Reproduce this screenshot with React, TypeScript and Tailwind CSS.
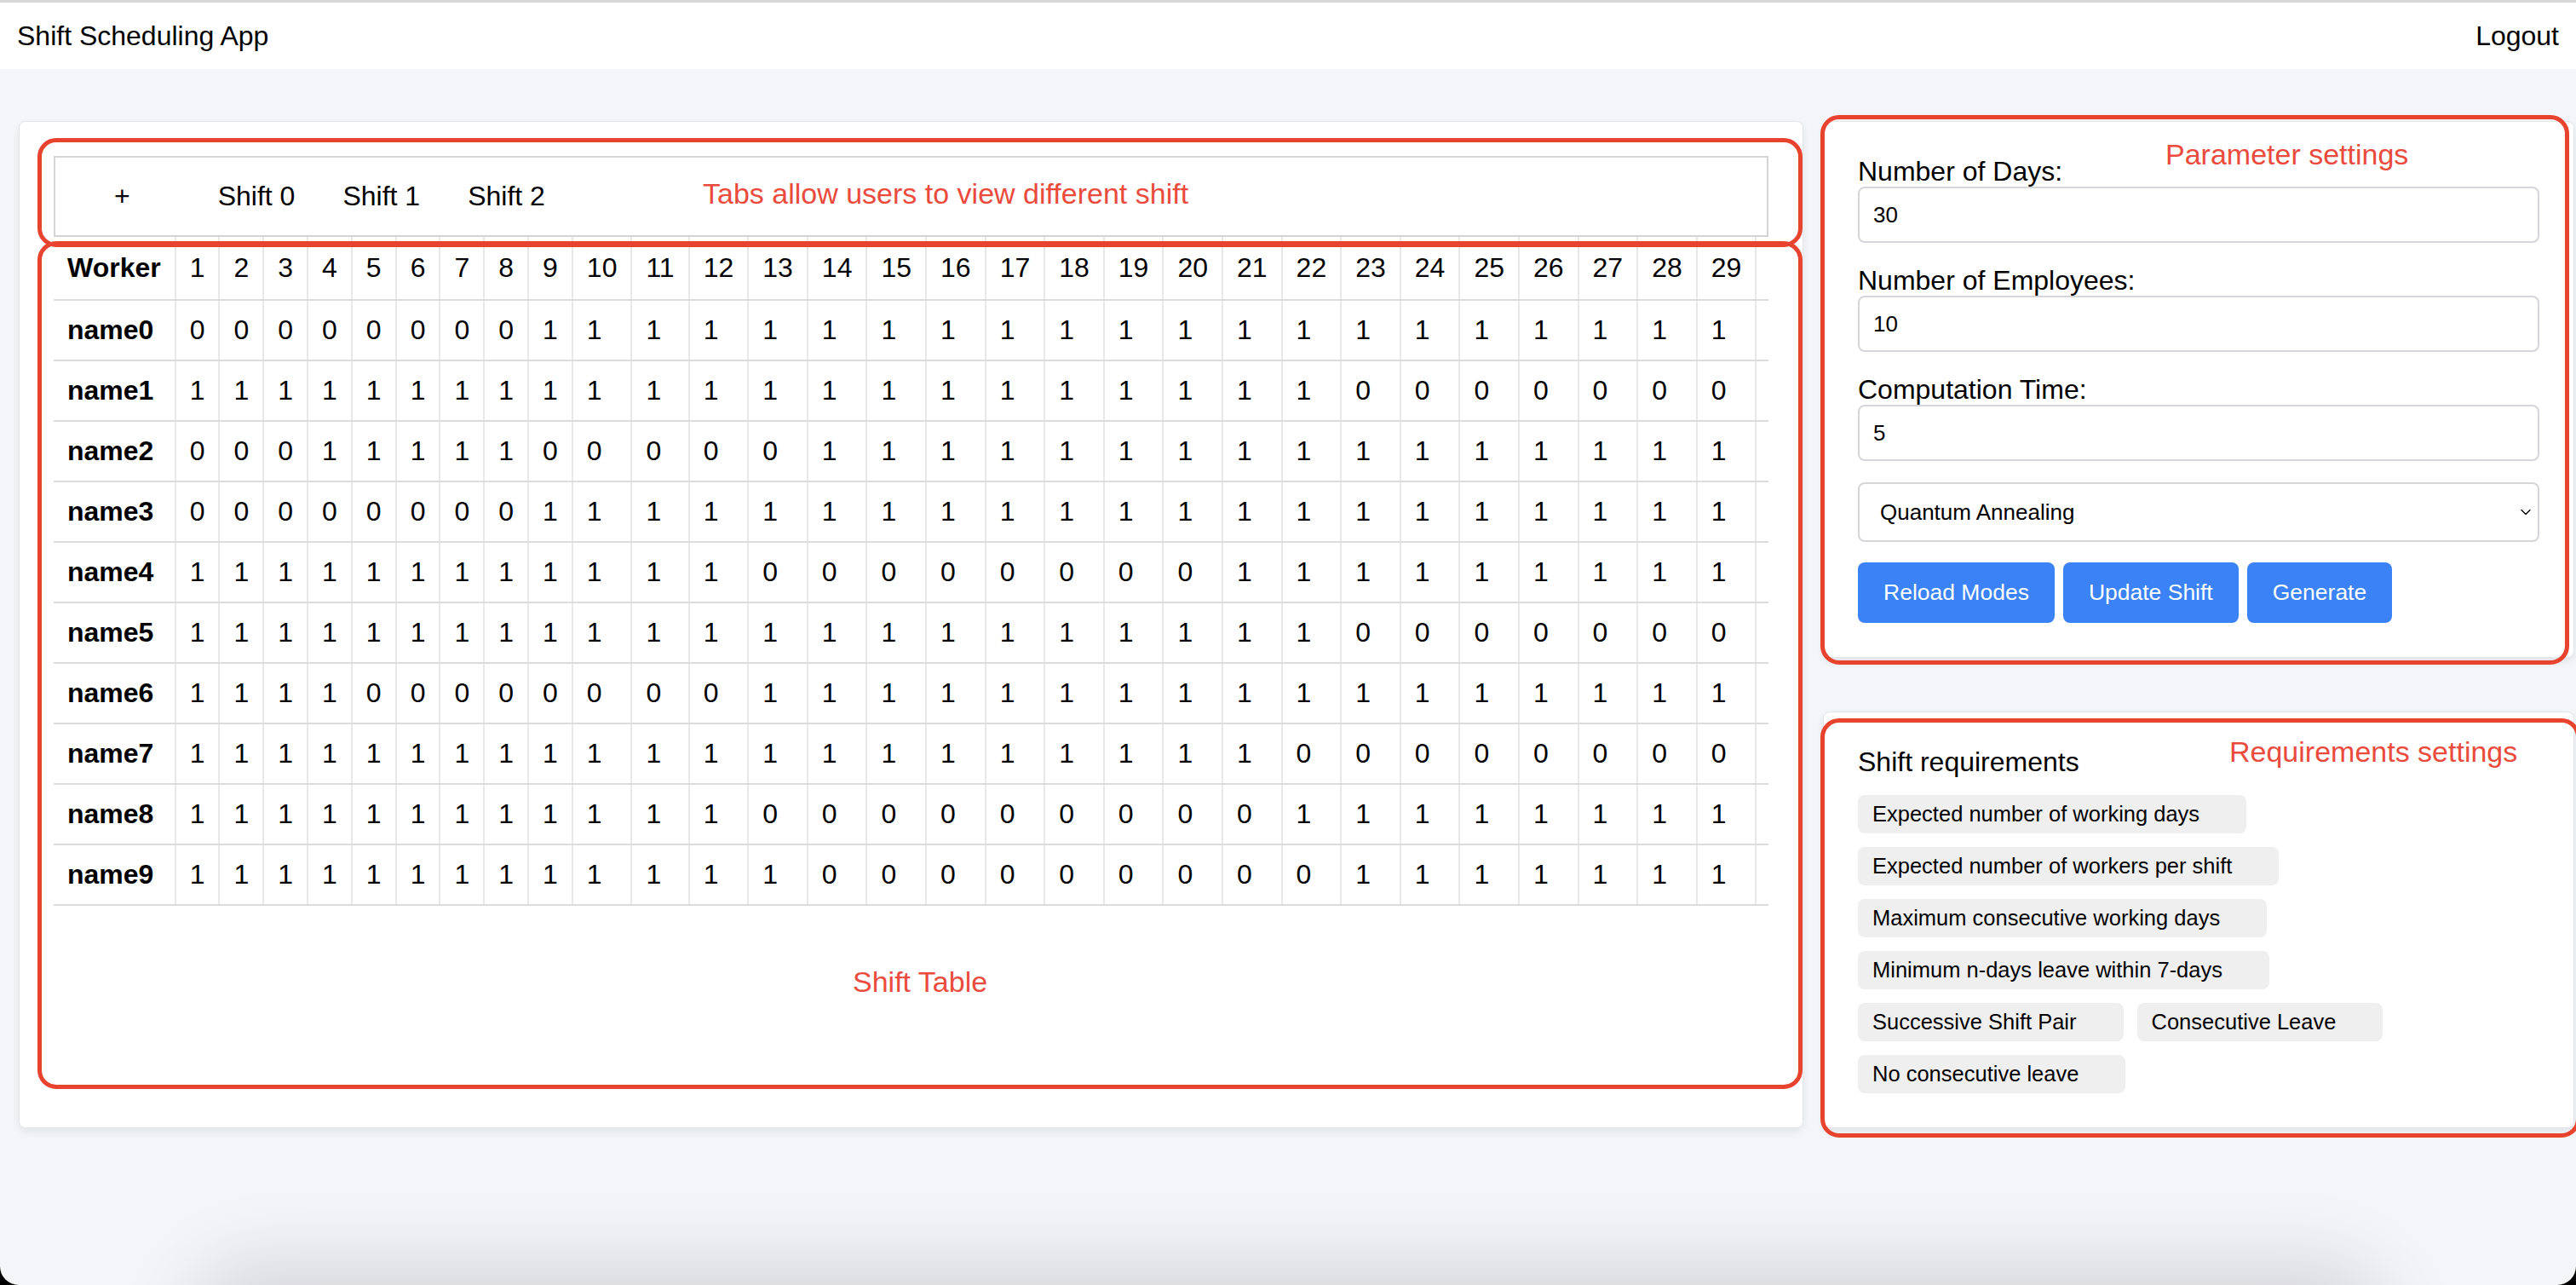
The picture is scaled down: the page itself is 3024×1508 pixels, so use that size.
import React from 'react';
import { ChevronDown } from 'lucide-react';

type Row = { name: string; days: number[] };

// build a row from [value, count] runs
const runs = (parts: [number, number][]) =>
  parts.flatMap(([v, n]) => Array(n).fill(v) as number[]);

const schedule: Row[] = [
  { name: 'name0', days: runs([[0, 8], [1, 21]]) },
  { name: 'name1', days: runs([[1, 22], [0, 7]]) },
  { name: 'name2', days: runs([[0, 3], [1, 5], [0, 5], [1, 16]]) },
  { name: 'name3', days: runs([[0, 8], [1, 21]]) },
  { name: 'name4', days: runs([[1, 12], [0, 8], [1, 9]]) },
  { name: 'name5', days: runs([[1, 22], [0, 7]]) },
  { name: 'name6', days: runs([[1, 4], [0, 8], [1, 17]]) },
  { name: 'name7', days: runs([[1, 21], [0, 8]]) },
  { name: 'name8', days: runs([[1, 12], [0, 9], [1, 8]]) },
  { name: 'name9', days: runs([[1, 13], [0, 9], [1, 7]]) },
];

const days = Array.from({ length: 29 }, (_, i) => i + 1);

const requirements = [
  'Expected number of working days',
  'Expected number of workers per shift',
  'Maximum consecutive working days',
  'Minimum n-days leave within 7-days',
  'Successive Shift Pair',
  'Consecutive Leave',
  'No consecutive leave',
];

const Field = ({ label, value, first }: { label: string; value: string; first?: boolean }) => (
  <div className={first ? '' : 'mt-[26px]'}>
    <div className="text-[32px] leading-[36px] text-black">{label}</div>
    <input
      readOnly
      value={value}
      className="w-full h-[66px] px-[16px] text-[26px] text-black border-2 border-[#d4d6da] rounded-[8px] bg-white outline-none"
    />
  </div>
);

const App: React.FC = () => {
  return (
    <div className="relative h-[1508px] w-full overflow-hidden bg-black font-['Liberation_Sans',Arial,sans-serif]">
      <div className="relative h-full rounded-b-[22px] overflow-hidden bg-[#f4f5f8]">
        {/* top bar */}
        <div className="h-[81px] bg-white border-t-[3px] border-[#d6d6d6] flex items-center justify-between px-[20px]">
          <span className="text-[32px] leading-[37px] text-black">Shift Scheduling App</span>
          <span className="text-[32px] leading-[37px] text-black">Logout</span>
        </div>

        <div className="flex items-stretch gap-[23px] pl-[22px] pt-[61px]">
          {/* shift table card */}
          <div className="w-[2095px] bg-white border border-[#e4e6ea] rounded-[8px] shadow-[0_4px_10px_rgba(0,0,0,0.07)] p-[40px]">
            <div className="h-[95px] border-2 border-[#d4d4d4] flex items-center pl-[41px] text-[32px] leading-[37px] text-black">
              <button className="px-[28px] mr-[47px]">+</button>
              <button className="px-[28px]">Shift 0</button>
              <button className="px-[28px]">Shift 1</button>
              <button className="px-[28px]">Shift 2</button>
            </div>

            <div className="overflow-hidden">
              <table className="border-collapse text-[32px] leading-[37px] text-black whitespace-nowrap">
                <thead>
                  <tr>
                    <th className="text-left font-bold px-[16px] py-[18px] border-b-2 border-[#dcdcdc]">Worker</th>
                    {days.map(d => (
                      <th key={d} className="text-left font-normal px-[16px] py-[18px] border-b-2 border-l-2 border-b-[#dcdcdc] border-l-[#e8e8e8]">
                        {d}
                      </th>
                    ))}
                    <th className="w-[16px] border-b-2 border-l-2 border-b-[#dcdcdc] border-l-[#e8e8e8]" />
                  </tr>
                </thead>
                <tbody>
                  {schedule.map(r => (
                    <tr key={r.name}>
                      <td className="font-bold px-[16px] py-[16px] border-b-2 border-[#dcdcdc]">{r.name}</td>
                      {r.days.map((v, i) => (
                        <td key={i} className="px-[16px] py-[16px] border-b-2 border-l-2 border-b-[#dcdcdc] border-l-[#e8e8e8]">
                          {v}
                        </td>
                      ))}
                      <td className="w-[16px] border-b-2 border-l-2 border-b-[#dcdcdc] border-l-[#e8e8e8]" />
                    </tr>
                  ))}
                </tbody>
              </table>
            </div>
          </div>

          {/* right column */}
          <div className="w-[882px] flex flex-col">
            <div className="bg-white border border-[#e4e6ea] rounded-[8px] shadow-[0_4px_10px_rgba(0,0,0,0.07)] p-[40px]">
              <Field first label="Number of Days:" value="30" />
              <Field label="Number of Employees:" value="10" />
              <Field label="Computation Time:" value="5" />
              <div className="relative mt-[25px]">
                <select className="appearance-none w-full h-[70px] pl-[24px] text-[26px] text-black border-2 border-[#d4d6da] rounded-[8px] bg-white outline-none">
                  <option>Quantum Annealing</option>
                </select>
                <ChevronDown size={20} strokeWidth={1.6} className="absolute right-[6px] top-[25px] text-black pointer-events-none" />
              </div>
              <div className="flex gap-[10px] mt-[24px]">
                {['Reload Modes', 'Update Shift', 'Generate'].map(b => (
                  <button key={b} className="h-[71px] px-[30px] bg-[#3b82f6] text-white text-[26.5px] rounded-[8px]">
                    {b}
                  </button>
                ))}
              </div>
            </div>

            <div className="mt-[63px] bg-white border border-[#e4e6ea] rounded-[8px] shadow-[0_4px_10px_rgba(0,0,0,0.07)] p-[40px]">
              <div className="text-[32px] leading-[37px] text-black">Shift requirements</div>
              <div className="mt-[20px] flex flex-wrap gap-[16px]">
                {requirements.map(q => (
                  <span key={q} className="h-[45px] flex items-center pl-[17px] pr-[55px] bg-[#efefef] rounded-[8px] text-[25.5px] text-black">
                    {q}
                  </span>
                ))}
              </div>
            </div>
          </div>
        </div>

        {/* annotation overlays */}
        <div className="absolute left-[44px] top-[162px] w-[2072px] h-[128px] border-[5px] border-[#e8432e] rounded-[22px] pointer-events-none" />
        <div className="absolute left-[44px] top-[283px] w-[2072px] h-[995px] border-[5px] border-[#e8432e] rounded-[22px] pointer-events-none" />
        <div className="absolute left-[2137px] top-[135px] w-[879px] h-[645px] border-[5px] border-[#e8432e] rounded-[22px] pointer-events-none" />
        <div className="absolute left-[2137px] top-[843px] w-[892px] h-[492px] border-[5px] border-[#e8432e] rounded-[22px] pointer-events-none" />
        <span className="absolute left-[825px] top-[207px] text-[34px] leading-[40px] text-[#ea4b3d]">Tabs allow users to view different shift</span>
        <span className="absolute left-[2542px] top-[161px] text-[34px] leading-[40px] text-[#ea4b3d]">Parameter settings</span>
        <span className="absolute left-[2617px] top-[862px] text-[34px] leading-[40px] text-[#ea4b3d]">Requirements settings</span>
        <span className="absolute left-[1001px] top-[1132px] text-[34px] leading-[40px] text-[#ea4b3d]">Shift Table</span>

        {/* window shadow at the bottom edge */}
        <div className="absolute left-[260px] right-[260px] top-[1520px] h-[80px] rounded-[40px] shadow-[0_0_90px_40px_rgba(0,0,0,0.12)] pointer-events-none" />
      </div>
    </div>
  );
};

export default App;
